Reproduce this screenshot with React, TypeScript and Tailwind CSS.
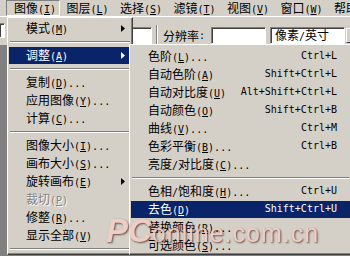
import clsx from "clsx";

const cjk = "font-['Noto_Sans_CJK_SC',sans-serif] text-[12px] leading-none";
const mono = "font-['DejaVu_Sans_Mono',monospace] text-[10px] leading-none";

type Item =
  | "sep"
  | {
      name: string;
      k: string;
      dots?: boolean;
      sub?: boolean;
      keys?: string;
      off?: boolean;
      on?: boolean;
    };

const barItems = [
  ["图像", "I"],
  ["图层", "L"],
  ["选择", "S"],
  ["滤镜", "T"],
  ["视图", "V"],
  ["窗口", "W"],
  ["帮助", "H"],
];

const imageMenu: Item[] = [
  { name: "模式", k: "M", sub: true },
  "sep",
  { name: "调整", k: "A", sub: true, on: true },
  "sep",
  { name: "复制", k: "D", dots: true },
  { name: "应用图像", k: "Y", dots: true },
  { name: "计算", k: "C", dots: true },
  "sep",
  { name: "图像大小", k: "I", dots: true },
  { name: "画布大小", k: "S", dots: true },
  { name: "旋转画布", k: "E", sub: true },
  { name: "裁切", k: "P", off: true },
  { name: "修整", k: "R", dots: true },
  { name: "显示全部", k: "V" },
  "sep",
];

const adjustMenu: Item[] = [
  { name: "色阶", k: "L", dots: true, keys: "Ctrl+L" },
  { name: "自动色阶", k: "A", keys: "Shift+Ctrl+L" },
  { name: "自动对比度", k: "U", keys: "Alt+Shift+Ctrl+L" },
  { name: "自动颜色", k: "O", keys: "Shift+Ctrl+B" },
  { name: "曲线", k: "V", dots: true, keys: "Ctrl+M" },
  { name: "色彩平衡", k: "B", dots: true, keys: "Ctrl+B" },
  { name: "亮度/对比度", k: "C", dots: true },
  "sep",
  { name: "色相/饱和度", k: "H", dots: true, keys: "Ctrl+U" },
  { name: "去色", k: "D", keys: "Shift+Ctrl+U", on: true },
  { name: "替换颜色", k: "R", dots: true },
  { name: "可选颜色", k: "S", dots: true },
];

// split chinese runs from latin runs, latin is drawn monospaced like SimSun
function Txt({ s }: { s: string }) {
  const parts = s.split(/([\u3400-\u9fff]+)/).filter(Boolean);
  return (
    <>
      {parts.map((p, i) => (
        <span key={i} className={/[\u3400-\u9fff]/.test(p) ? cjk : mono}>
          {p}
        </span>
      ))}
    </>
  );
}

function Label({ name, k, dots }: { name: string; k: string; dots?: boolean }) {
  return (
    <span className="flex items-baseline whitespace-nowrap">
      <Txt s={name} />
      <span className={mono}>
        (<span className="underline underline-offset-[1px]">{k}</span>){dots ? "..." : ""}
      </span>
    </span>
  );
}

function Arrow() {
  return (
    <svg width="4" height="7" viewBox="0 0 4 7" className="ml-auto">
      <path d="M0 0L4 3.5L0 7Z" fill="currentColor" />
    </svg>
  );
}

function Sep() {
  return (
    <div className="h-[9px] flex items-center px-[1px]">
      <div className="w-full border-t border-t-[#808080] border-b border-b-white" />
    </div>
  );
}

function Menu({ items, pr }: { items: Item[]; pr: string }) {
  return (
    <>
      {items.map((it, i) =>
        it === "sep" ? (
          <Sep key={i} />
        ) : (
          <div key={i} className="h-[18px] flex items-center">
            <div
              className={clsx(
                "h-[17px] w-full flex items-center pl-[17px]",
                pr,
                it.on && "bg-[#0a246a] text-white",
                it.off && "text-[#808080] [text-shadow:1px_1px_0_#ffffff]"
              )}
            >
              <Label name={it.name} k={it.k} dots={it.dots} />
              {it.sub && <Arrow />}
              {it.keys && <span className={clsx(mono, "ml-auto whitespace-nowrap")}>{it.keys}</span>}
            </div>
          </div>
        )
      )}
    </>
  );
}

const popup =
  "absolute bg-[#d4d0c8] border border-t-white border-l-white border-r-[#404040] border-b-[#404040] shadow-[inset_-1px_-1px_0_#808080]";
const field =
  "shrink-0 bg-white border border-t-[#808080] border-l-[#808080] border-r-white border-b-white shadow-[inset_1px_1px_0_#404040]";

export default function App() {
  return (
    <div className="relative w-[350px] h-[256px] overflow-hidden bg-[#808080] text-black select-none">
      {/* menu bar */}
      <div className="h-[17px] bg-[#d4d0c8] flex pl-[6px] border-b border-b-white">
        {barItems.map(([n, k], i) => (
          <div
            key={n}
            className={clsx(
              "w-[53.5px] h-[16px] shrink-0 flex items-center pl-[7px]",
              i === 0 && "border border-t-[#808080] border-l-[#808080] border-r-white border-b-white pl-[6px]"
            )}
          >
            <Label name={n} k={k} />
          </div>
        ))}
      </div>

      {/* options bar */}
      <div className="h-[28px] bg-[#d4d0c8] flex items-start">
        <div className={clsx(field, "w-[5px] h-[15px] mt-[6px] border-l-0")} />
        <div className={clsx(field, "ml-[65px] w-[82px] h-[17px] mt-[10px]")} />
        <div className="shrink-0 ml-[4px] mt-[8px] w-[2px] h-[20px] border-l border-l-[#808080] border-r border-r-white" />
        <div className="shrink-0 ml-[5px] mt-[10px] h-[17px] flex items-center whitespace-nowrap">
          <Txt s="分辨率:" />
        </div>
        <div className={clsx(field, "ml-[6px] w-[55px] h-[17px] mt-[10px]")} />
        <div className={clsx(field, "ml-[4px] w-[75px] h-[17px] mt-[10px] flex items-center pl-[4px]")}>
          <span className="flex items-baseline whitespace-nowrap">
            <Txt s="像素/英寸" />
          </span>
        </div>
        <div className="shrink-0 ml-px mt-[11px] w-[16px] h-[15px] bg-[#d4d0c8] border border-t-white border-l-white border-r-[#404040] border-b-[#404040]" />
      </div>

      {/* 图像 menu */}
      <div className={clsx(popup, "left-[7px] top-[17px] w-[126px] p-[1px]")}>
        <Menu items={imageMenu} pr="pr-[6px]" />
      </div>

      {/* 调整 submenu */}
      <div className={clsx(popup, "left-[129px] top-[44px] w-[223px] px-[1px] pt-[2px]")}>
        <Menu items={adjustMenu} pr="pr-[13px]" />
      </div>

      {/* watermark */}
      <div className="absolute left-[106px] top-[214px] flex items-baseline opacity-85 text-[#f3cdc4] font-['Liberation_Sans',sans-serif] [text-shadow:1px_1px_2px_rgba(70,35,25,0.9)] pointer-events-none">
        <span className="text-[33px] leading-none font-bold italic">PC</span>
        <span className="text-[25px] leading-none tracking-[1px]">online.com.cn</span>
      </div>
    </div>
  );
}
